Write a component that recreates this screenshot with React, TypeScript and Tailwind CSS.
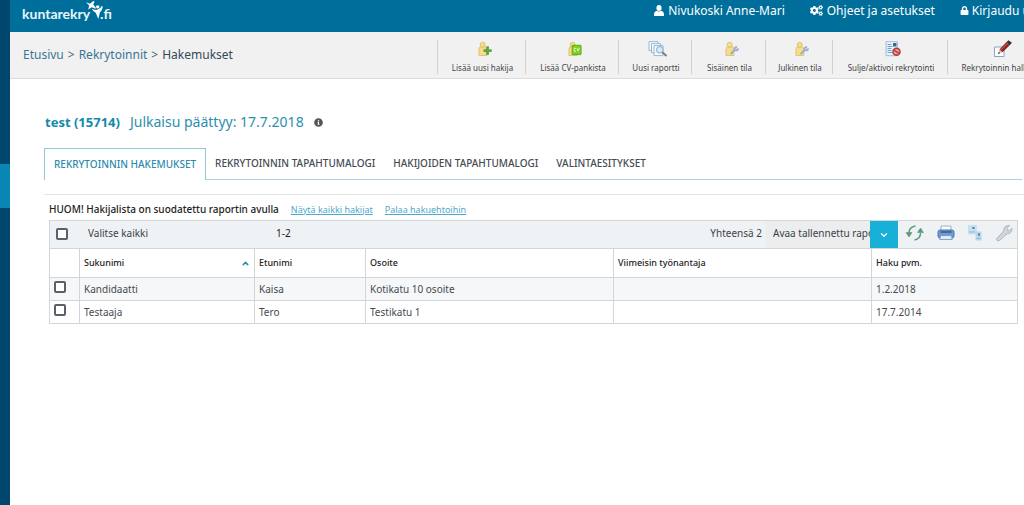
import React from "react";
import { FaCogs, FaLock, FaInfoCircle } from "react-icons/fa";
import { ChevronDown, ChevronUp } from "lucide-react";

function UserIcon() {
  return (
    <svg width="10" height="11" viewBox="0 0 10 11" fill="#fff" aria-hidden="true">
      <ellipse cx="5" cy="3" rx="2.600" ry="3" />
      <path d="M0 11V9q0-2.500 2.600-3.300 2.400 1.400 4.800 0Q10 6.500 10 9v2z" />
    </svg>
  );
}

function Person() {
  return (
    <g fill="#f6dd8c" stroke="#d3b04f" strokeWidth="0.7">
      <path d="M1 15V8q0-2 2-2.500h4.500q2 .5 2 2.500v7z" />
      <circle cx="5" cy="3.500" r="2.700" />
    </g>
  );
}

function AddPersonIcon() {
  return (
    <svg width="14" height="16" viewBox="0 0 15 16" aria-hidden="true">
      <Person />
      <path d="M9.300 5.500h2v3.200h3v2h-3v3.200h-2v-3.200h-3v-2h3z" fill="#5fae3c" stroke="#3d8228" strokeWidth="0.6" />
    </svg>
  );
}

function CvPersonIcon() {
  return (
    <svg width="14" height="16" viewBox="0 0 15 16" aria-hidden="true">
      <Person />
      <rect x="4.500" y="4" width="9.500" height="10" rx="0.600" fill="#7ed022" stroke="#56a80f" />
      <path d="M8.600 7.300a1.700 1.700 0 1 0 0 3.200M9.600 7.300l1.200 3L12.300 7" fill="none" stroke="#f2ffe2" strokeWidth="0.900" />
    </svg>
  );
}

function ReportIcon() {
  return (
    <svg width="20" height="16" viewBox="0 0 20 16" aria-hidden="true">
      <g fill="#f4f9fc" stroke="#8fb4cf" strokeWidth="0.9">
        <path d="M1 .6h9v9H1z" />
        <path d="M3.500 2.600h9v9h-9z" />
        <path d="M6 4.600h9v10H6z" />
      </g>
      <path d="m14 11 4.500 4" stroke="#857b73" strokeWidth="2" />
      <circle cx="11.800" cy="8.800" r="3.300" fill="#d5ebf9" stroke="#85a8c2" />
    </svg>
  );
}

function PersonToolIcon() {
  return (
    <svg width="14" height="16" viewBox="0 0 15 16" aria-hidden="true">
      <Person />
      <path d="m6.500 13 4-4" stroke="#8fa8d0" strokeWidth="1.800" strokeLinecap="round" />
      <path d="m13 5.800-1.500 1.500.8 1.200 2-1a2.300 2.300 0 1 1-1.300-1.700z" fill="#b9cbe8" stroke="#7f9bc9" strokeWidth="0.800" />
    </svg>
  );
}

function BlockIcon() {
  return (
    <svg width="16" height="16" viewBox="0 0 16 16" aria-hidden="true">
      <path d="M1 .7h11.500v14H1z" fill="#e8f3fb" stroke="#9dbfd8" />
      <path d="M2.500 3.500h4m-4 2h5m-5 2h4m-4 2h4m-4 2h5" stroke="#6fa2c6" />
      <path d="M8 2h3.500v3.500H8z" fill="#376b86" />
      <circle cx="11.500" cy="10.800" r="3.500" fill="#e2a09c" stroke="#b5383a" strokeWidth="1.500" />
      <path d="m9 9 5 3.500" stroke="#b5383a" strokeWidth="1.500" />
    </svg>
  );
}

function EditIcon() {
  return (
    <svg width="20" height="18" viewBox="0 0 20 18" aria-hidden="true">
      <path d="M1.500 7H11v9.500H1.500z" fill="#fff" stroke="#7fa6d4" />
      <path d="m5 14 1.500-4.500L9.500 12.300z" fill="#ecc48b" />
      <path d="M6.500 9.500 13 2.500l3.500 3-7 6.800z" fill="#8f2326" />
      <path d="m13 2.500 2.500-2.200 3.500 2.500-2.500 2.700z" fill="#3a3438" />
      <path d="m7.800 10 7-7" stroke="#d06a64" />
      <path d="m5 14 .8-2 1.400 1z" fill="#222" />
    </svg>
  );
}

const actions = [
  { label: "Lisää uusi hakija", icon: <AddPersonIcon />, width: "w-[88px]" },
  { label: "Lisää CV-pankista", icon: <CvPersonIcon />, width: "w-[93px]" },
  { label: "Uusi raportti", icon: <ReportIcon />, width: "w-[73px]" },
  { label: "Sisäinen tila", icon: <PersonToolIcon />, width: "w-[74px]" },
  { label: "Julkinen tila", icon: <PersonToolIcon />, width: "w-[67px]" },
  { label: "Sulje/aktivoi rekrytointi", icon: <BlockIcon />, width: "w-[115px]" },
  { label: "Rekrytoinnin hallinta", icon: <EditIcon />, width: "w-[104px]" },
];

const tabs = ["Rekrytoinnin hakemukset", "Rekrytoinnin tapahtumalogi", "Hakijoiden tapahtumalogi", "Valintaesitykset"];

const rows = [
  { last: "Kandidaatti", first: "Kaisa", address: "Kotikatu 10 osoite", employer: "", date: "1.2.2018" },
  { last: "Testaaja", first: "Tero", address: "Testikatu 1", employer: "", date: "17.7.2014" },
];

const box = "block size-3 appearance-none rounded-[2px] border-2 border-[#59616a] bg-white checked:bg-[#19b0d8]";
const cell = "border border-[#d3d5d6] px-1";

function Logo() {
  return (
    <a href="#" aria-label="kuntarekry.fi" className="flex h-6 items-end font-['Lato',sans-serif] text-sm leading-[21px] font-bold text-[#e9f5fa]">
      <span>kuntarekry</span>
      <svg className="-mx-1 mb-1" width="18" height="20" viewBox="0 0 20 20" fill="#fff" aria-hidden="true">
        <path d="M0 1.500 4.500 3 8 0l1.500.8L8 4l3 3.500-.5 1.200L6.500 7 2.500 9.500 3.500 5z" />
        <circle cx="13" cy="6.500" r="1.900" />
        <path d="M6.500 8.500Q10.500 10.500 13 9.500q3-1 4.500-4l1.200.5q-.5 4.500-3.200 6.500l-1.800 7.500-2.900-7Q7.500 11.500 6.500 8.500z" />
      </svg>
      <span>.fi</span>
    </a>
  );
}

function TopBar() {
  return (
    <header className="flex h-8 shrink-0 items-start justify-between overflow-hidden bg-[#006e9b] pl-3">
      <Logo />
      <nav className="-mr-[30px] flex h-[21px] shrink-0 items-center gap-[25px] text-xs whitespace-nowrap text-white" aria-label="Käyttäjä">
        <a href="#" className="flex items-center gap-1"><UserIcon />Nivukoski Anne-Mari</a>
        <a href="#" className="flex items-center gap-1"><FaCogs size={13} />Ohjeet ja asetukset</a>
        <a href="#" className="flex items-center gap-[3px] pr-2"><FaLock size={9} />Kirjaudu ulos</a>
      </nav>
    </header>
  );
}

function ActionBar() {
  return (
    <div className="flex h-[47px] shrink-0 overflow-hidden border-b border-[#dcdcdc] bg-[#f1f1f1]">
      <nav className="flex h-[46px] w-[427px] shrink-0 items-center gap-1 pl-[13px] text-xs text-[#3a7694]" aria-label="Murupolku">
        <a href="#">Etusivu</a>
        <span className="text-[#50606b]">&gt;</span>
        <a href="#">Rekrytoinnit</a>
        <span className="text-[#50606b]">&gt;</span>
        <span className="text-[#34495a]">Hakemukset</span>
      </nav>
      <div className="flex shrink-0 pt-2">
        {actions.map((a) => (
          <button key={a.label} type="button" className={`${a.width} flex h-[34px] shrink-0 flex-col items-center justify-between border-l border-[#d0d0d0] pl-[2px] text-[8px] leading-3 whitespace-nowrap text-[#444]`}>
            <span className="flex h-[18px] items-center pl-1">{a.icon}</span>
            {a.label}
          </button>
        ))}
      </div>
    </div>
  );
}

function RefreshIcon() {
  return (
    <svg width="20" height="18" viewBox="0 0 20 18" fill="none" stroke="#5d9a7c" strokeWidth="1.500" aria-hidden="true">
      <path d="M10.500 2Q4 3 4 9M9.500 16q6-1 6-7" />
      <path d="m1 8.500 3 4.500 3-4.500zM12.500 8.500 15.500 4l3 4.500z" fill="#5d9a7c" strokeWidth="0.600" />
    </svg>
  );
}

function PrinterIcon() {
  return (
    <svg width="18" height="18" viewBox="0 0 18 18" aria-hidden="true">
      <path d="M4 7V2h10v5" fill="#fafcff" stroke="#9fb2c9" />
      <rect x="1" y="6" width="16" height="8" rx="2" fill="#6f9ad2" stroke="#4a76b4" />
      <path d="M3.500 8h11" stroke="#34517c" strokeWidth="1.300" />
      <path d="m3.500 11.500-.7 4h12.400l-.7-4z" fill="#dfeaf8" stroke="#6c90bb" strokeWidth="0.800" />
    </svg>
  );
}

function TransferIcon() {
  return (
    <svg width="16" height="18" viewBox="0 0 16 18" aria-hidden="true">
      <path d="M1 1h9v9.500H1z" fill="#c9e0f0" />
      <path d="M8.500 7.500h6v9h-6z" fill="#bdd7ea" />
      <path d="M5.500 3h2v2h-2zM11 9.500h2v2h-2z" fill="#3f7fa8" />
      <path d="M2 8h6M9.500 14.500h4" stroke="#8db6d1" />
    </svg>
  );
}

function WrenchIcon() {
  return (
    <svg width="18" height="18" viewBox="0 0 18 18" aria-hidden="true">
      <path d="M14.500 1.500 12 4.200l.6 1.900 2 .4 2.300-2.300q.4 5.500-4.900 5.600L4.500 16.500q-1.800 1-2.600-.2-.8-1.100.3-2.300L8.700 7Q8.500 1.400 14.500 1.500z" fill="#d0d6db" stroke="#aeb7be" />
    </svg>
  );
}

function ListBar() {
  return (
    <div className="flex h-7 items-center border border-b-0 border-[#d3d5d6] bg-[#eff2f5] text-[10px] text-[#3d4348]">
      <label className="flex w-[226px] shrink-0 items-center gap-5 pb-[2px] pl-[6px]">
        <input type="checkbox" className={box} />
        Valitse kaikki
      </label>
      <span className="pb-[2px] text-[#222]">1-2</span>
      <span className="ml-auto pr-1 pb-[2px]">Yhteensä 2</span>
      <div className="relative h-[27px] w-[132px] shrink-0">
        <select aria-label="Tallennettu raportti" className="h-full w-full appearance-none bg-[#ebedee] pr-6 pb-[2px] pl-[7px]">
          <option>Avaa tallennettu raportti</option>
        </select>
        <span className="pointer-events-none absolute inset-y-0 right-0 flex w-7 items-center justify-center bg-[#19b0d8] text-white">
          <ChevronDown size={10} strokeWidth={3} />
        </span>
      </div>
      <div className="flex shrink-0 items-center gap-3 pr-[4px] pb-1 pl-[7px]">
        <button type="button" aria-label="Päivitä"><RefreshIcon /></button>
        <button type="button" aria-label="Tulosta"><PrinterIcon /></button>
        <button type="button" aria-label="Siirrä"><TransferIcon /></button>
        <button type="button" aria-label="Asetukset"><WrenchIcon /></button>
      </div>
    </div>
  );
}

function ApplicantTable() {
  return (
    <table className="w-full table-fixed border-collapse text-left text-[10px] leading-4 text-[#454b50]">
      <colgroup>
        <col className="w-[30px]" />
        <col className="w-[175px]" />
        <col className="w-[111px]" />
        <col className="w-[248px]" />
        <col />
        <col className="w-[146px]" />
      </colgroup>
      <thead>
        <tr className="h-[29px] text-[9px] text-[#222]">
          <td className={cell} />
          <th className={`${cell} font-medium`}>
            <button type="button" className="flex w-full items-center justify-between">
              Sukunimi
              <ChevronUp size={9} strokeWidth={4} className="text-[#2c8db3]" />
            </button>
          </th>
          <th className={`${cell} font-medium`}>Etunimi</th>
          <th className={`${cell} font-medium`}>Osoite</th>
          <th className={`${cell} font-medium`}>Viimeisin työnantaja</th>
          <th className={`${cell} font-medium`}>Haku pvm.</th>
        </tr>
      </thead>
      <tbody>
        {rows.map((r) => (
          <tr key={r.last} className="h-[23px] odd:bg-[#f5f7f9]">
            <td className={`${cell} pb-1`}>
              <input type="checkbox" aria-label={r.last} className={box} />
            </td>
            <td className={cell}>{r.last}</td>
            <td className={cell}>{r.first}</td>
            <td className={cell}>{r.address}</td>
            <td className={cell}>{r.employer}</td>
            <td className={cell}>{r.date}</td>
          </tr>
        ))}
      </tbody>
    </table>
  );
}

export default function App() {
  return (
    <div className="flex min-h-screen bg-white font-['Noto_Sans','Open_Sans',sans-serif]">
      <aside className="w-[10px] shrink-0 bg-[#00466d] pt-[164px]">
        <div className="h-11 bg-[#0a86b5]" />
      </aside>
      <div className="flex min-w-0 flex-1 flex-col">
        <TopBar />
        <ActionBar />
        <main className="pt-[31px] pl-[34px]">
          <h1 className="flex h-6 items-center gap-[10px] pl-px text-sm text-[#2e8fad]">
            <strong className="text-[13px] text-[#128aa9]">test (15714)</strong>
            <span>Julkaisu päättyy: 17.7.2018</span>
            <FaInfoCircle size={9} className="text-[#555]" />
          </h1>
          <div className="mt-[14px] mr-[2px] flex h-8 text-[10px] font-medium whitespace-nowrap text-[#454c53]" role="tablist">
            {tabs.map((t, i) => (
              <button
                key={t}
                type="button"
                role="tab"
                aria-selected={i === 0}
                className={
                  i === 0
                    ? "border border-b-0 border-[#8fc9d9] px-[9px] pb-px text-[#2d8bad] uppercase"
                    : "border-b border-[#a9d3de] px-[9px] uppercase"
                }
              >
                {t}
              </button>
            ))}
            <div className="flex-1 border-b border-[#a9d3de]" />
          </div>
          <hr className="mt-[14px] border-[#e2e4e5]" />
          <section className="mr-[6px] ml-[5px]">
            <p className="flex h-[25px] items-center gap-3 pt-1 text-[10px] font-medium text-[#222]">
              HUOM! Hakijalista on suodatettu raportin avulla
              <a href="#" className="text-[9px] font-normal text-[#4ea9cc] underline">Näytä kaikki hakijat</a>
              <a href="#" className="text-[9px] font-normal text-[#4ea9cc] underline">Palaa hakuehtoihin</a>
            </p>
            <ListBar />
            <ApplicantTable />
          </section>
        </main>
      </div>
    </div>
  );
}
